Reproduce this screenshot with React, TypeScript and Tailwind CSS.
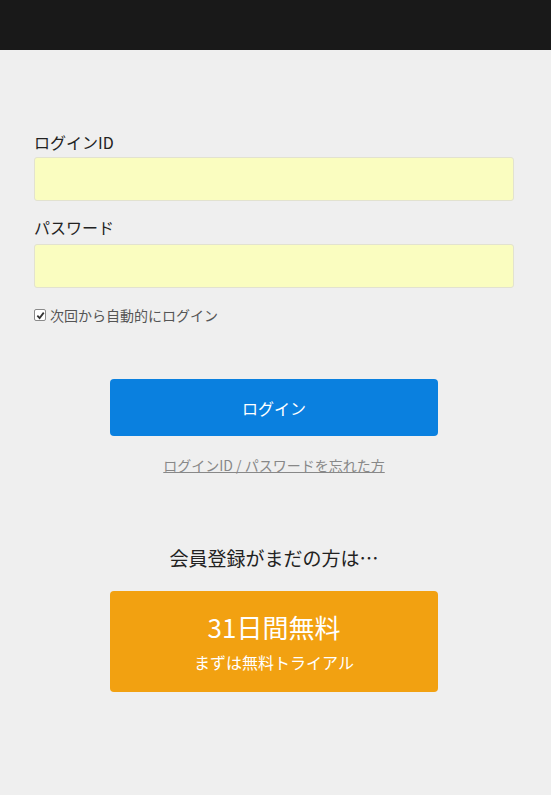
export default function App() {
  return (
    <div className="min-h-[795px] bg-[#efefef] font-['Noto_Sans_CJK_JP','Noto_Sans',sans-serif] text-[#222]">
      <header className="h-[50px] bg-[#191919]" />
      <main className="pl-[34px] pr-[37px] pt-[79px]">
        <form className="flex flex-col">
          <label className="text-[16px] leading-[26px]">ログインID</label>
          <input
            type="text"
            className="mt-[2px] h-[44px] w-full rounded-[3px] border border-[#e2e2d0] bg-[#fafdc0] px-2 outline-none"
          />
          <label className="mt-[13px] text-[16px] leading-[26px]">パスワード</label>
          <input
            type="password"
            className="mt-[4px] h-[44px] w-full rounded-[3px] border border-[#e2e2d0] bg-[#fafdc0] px-2 outline-none"
          />
          <div className="mt-[16px] flex items-center gap-[4px] text-[14px] leading-[22px] text-[#555]">
            <span className="flex h-[12px] w-[12px] items-center justify-center rounded-[2px] border border-[#8a8a8a] bg-white">
              <svg viewBox="0 0 10 10" className="h-[9px] w-[9px]">
                <path d="M1.5 5.2 L4 7.8 L8.6 1.8" fill="none" stroke="#333" strokeWidth="2" />
              </svg>
            </span>
            <span>次回から自動的にログイン</span>
          </div>
        </form>

        <div className="mt-[53px] flex flex-col items-center">
          <button
            type="button"
            className="h-[57px] w-[328px] rounded-[4px] bg-[#0a80df] text-[16px] text-white"
          >
            ログイン
          </button>
          <a className="mt-[18px] text-[14px] leading-[22px] text-[#888] underline">
            ログインID / パスワードを忘れた方
          </a>

          <p className="mt-[68px] text-[19px] leading-[28px] text-[#222]">会員登録がまだの方は…</p>
          <button
            type="button"
            className="mt-[19px] flex h-[101px] w-[328px] flex-col items-center rounded-[4px] bg-[#f2a111] pt-[17px] text-white"
          >
            <span className="text-[26px] leading-[38px]">31日間無料</span>
            <span className="mt-[4px] text-[16px] leading-[24px]">まずは無料トライアル</span>
          </button>
        </div>
      </main>
    </div>
  );
}
